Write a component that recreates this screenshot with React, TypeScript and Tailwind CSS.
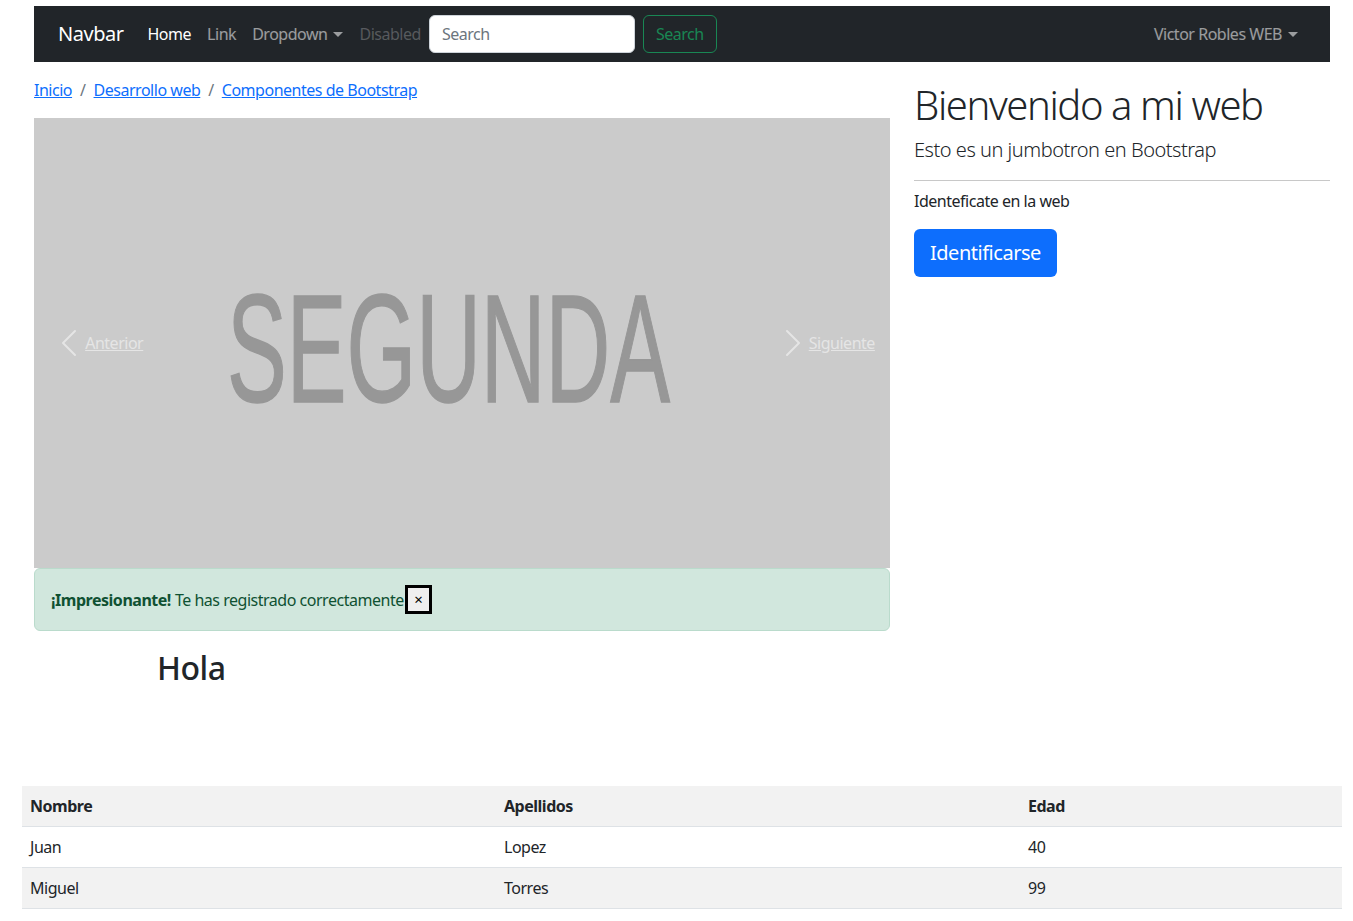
import React from 'react'

const font = { fontFamily: '"Segoe UI", "Noto Sans", "Liberation Sans", sans-serif' }

function Caret() {
  return (
    <span className="ml-[6px] inline-block align-[3px] border-t-[5px] border-x-[5px] border-t-current border-x-transparent" />
  )
}

function Chevron({ flip }: { flip?: boolean }) {
  return (
    <svg viewBox="0 0 16 16" className={`w-8 h-8 ${flip ? 'rotate-180' : ''}`} fill="#fff">
      <path d="M11.354 1.646a.5.5 0 0 1 0 .708L5.707 8l5.647 5.646a.5.5 0 0 1-.708.708l-6-6a.5.5 0 0 1 0-.708l6-6a.5.5 0 0 1 .708 0z" />
    </svg>
  )
}

function Navbar() {
  return (
    <nav className="h-[56px] bg-[#212529] flex items-center pl-6 pr-8 text-[16px]">
      <a className="text-white text-[20px] mr-4">Navbar</a>
      <ul className="flex items-center">
        <li><a className="px-2 text-white">Home</a></li>
        <li><a className="px-2 text-white/55">Link</a></li>
        <li><a className="px-2 text-white/55">Dropdown<Caret /></a></li>
        <li><a className="px-2 text-white/25">Disabled</a></li>
      </ul>
      <form className="flex items-center">
        <input
          placeholder="Search"
          className="w-[206px] h-[38px] rounded-[6px] bg-white border border-[#ced4da] px-3 text-[16px] tracking-[-0.03em] placeholder:text-[#6c757d] outline-none"
        />
        <button type="button" className="ml-2 h-[38px] px-3 rounded-[6px] border border-[#198754] text-[#198754]">
          Search
        </button>
      </form>
      <a className="ml-auto text-white/55">Victor Robles WEB<Caret /></a>
    </nav>
  )
}

function Carousel() {
  return (
    <div className="relative h-[450px] bg-[#cbcbcb]">
      <svg viewBox="0 0 856 450" className="w-full h-full">
        <text
          x="193"
          y="284"
          fontSize="154"
          textLength="443"
          lengthAdjust="spacingAndGlyphs"
          fill="#979797"
          stroke="#979797"
          strokeWidth="1.5"
          style={{ fontFamily: '"Liberation Sans", Arial, sans-serif', letterSpacing: 0 }}
        >
          SEGUNDA
        </text>
      </svg>
      <a className="absolute left-0 top-0 bottom-0 w-[15%] flex items-center justify-center opacity-50 text-white underline">
        <Chevron />
        <span>Anterior</span>
      </a>
      <a className="absolute right-0 top-0 bottom-0 w-[15%] flex items-center justify-center opacity-50 text-white underline">
        <Chevron flip />
        <span>Siguiente</span>
      </a>
    </div>
  )
}

const rows = [
  { nombre: 'Juan', apellidos: 'Lopez', edad: 40 },
  { nombre: 'Miguel', apellidos: 'Torres', edad: 99 },
]

export default function App() {
  return (
    <div className="min-h-[921px] bg-white text-[#212529] text-[16px] leading-[1.5] tracking-[-0.03em]" style={font}>
      <div className="w-[1320px] ml-[22px] px-3 pt-[6px]">
        <Navbar />

        <div className="flex gap-6 mt-4">
          <div className="w-[856px]">
            <ol className="flex items-center mb-4 text-[#6c757d]">
              <li><a className="text-[#0d6efd] underline">Inicio</a></li>
              <li className="px-2">/</li>
              <li><a className="text-[#0d6efd] underline">Desarrollo web</a></li>
              <li className="px-2">/</li>
              <li><a className="text-[#0d6efd] underline">Componentes de Bootstrap</a></li>
            </ol>

            <Carousel />

            <div className="h-[63px] flex items-center px-4 rounded-[6px] border border-[#badbcc] bg-[#d1e7dd] text-[#0f5132]">
              <strong className="font-bold">¡Impresionante!</strong>
              <span className="ml-[4px]">Te has registrado correctamente</span>
              <button
                type="button"
                className="ml-[1px] w-[27px] h-[29px] flex items-center justify-center border-[3px] border-black bg-[#efefef] text-black text-[15px] leading-none"
              >
                ×
              </button>
            </div>

            <h2 className="mt-[18px] ml-[123px] text-[32px] font-medium leading-[1.2]">Hola</h2>
          </div>

          <div className="w-[416px] pt-[3px]">
            <h1 className="text-[40px] font-light leading-[1.2] mb-[6px] tracking-[-0.035em]">Bienvenido a mi web</h1>
            <p className="text-[20px] font-light">Esto es un jumbotron en Bootstrap</p>
            <hr className="mt-[15px] mb-2 border-t border-[#c8c8c8]" />
            <p className="mb-4">Identeficate en la web</p>
            <button type="button" className="h-[48px] px-4 rounded-[6px] bg-[#0d6efd] text-white text-[20px]">
              Identificarse
            </button>
          </div>
        </div>
      </div>

      <table className="ml-[22px] w-[1320px] mt-[99px] border-collapse text-left">
        <thead>
          <tr className="bg-[#f2f2f2] border-b border-[#dee2e6]">
            <th className="w-[474px] px-2 py-2 font-bold">Nombre</th>
            <th className="w-[524px] px-2 py-2 font-bold">Apellidos</th>
            <th className="px-2 py-2 font-bold">Edad</th>
          </tr>
        </thead>
        <tbody>
          {rows.map((r, i) => (
            <tr key={r.nombre} className={`border-b border-[#dee2e6] ${i % 2 === 1 ? 'bg-[#f2f2f2]' : 'bg-white'}`}>
              <td className="px-2 py-2">{r.nombre}</td>
              <td className="px-2 py-2">{r.apellidos}</td>
              <td className="px-2 py-2">{r.edad}</td>
            </tr>
          ))}
        </tbody>
      </table>
    </div>
  )
}
